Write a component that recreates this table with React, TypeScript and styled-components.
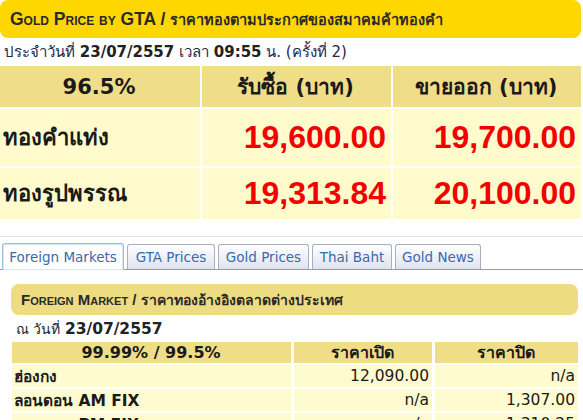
import React from "react";
import styled, { createGlobalStyle } from "styled-components";

const Global = createGlobalStyle`
  html, body { margin: 0; padding: 0; background: #fff; }
  body { font-family: "DejaVu Sans", "Noto Sans", sans-serif; color: #222; }
`;

const Page = styled.div`
  width: 583px;
  height: 420px;
  overflow: hidden;
  display: flex;
  flex-direction: column;
  & > * { flex-shrink: 0; }
`;

const Banner = styled.div`
  height: 38px;
  margin-right: 2px;
  background: #ffd700;
  border-radius: 8px;
  display: flex;
  align-items: center;
  padding-left: 10px;
  font-family: "Liberation Sans", "Noto Sans", sans-serif;
  font-weight: bold;
  font-size: 17.5px;
  font-variant: small-caps;
  color: #2a2a2a;
  white-space: pre;
`;

const ThaiPart = styled.span<{ $size: number }>`
  font-size: ${(p) => p.$size}px;
`;

const DateLine = styled.div`
  height: 28px;
  display: flex;
  align-items: center;
  padding-left: 4px;
  font-size: 15px;
  color: #26264a;
  b { color: #222; }
`;

const PriceGrid = styled.div`
  display: grid;
  grid-template-columns: 200px 189px 1fr;
  grid-template-rows: 41px 57px 51px;
  gap: 2px;
  margin-right: 2px;
`;

const Cell = styled.div<{ $head?: boolean; $align?: string }>`
  background: ${(p) => (p.$head ? "#efdd88" : "#fffbcc")};
  display: flex;
  align-items: center;
  justify-content: ${(p) => p.$align || "center"};
  font-weight: bold;
  font-size: ${(p) => (p.$head ? "21px" : "22px")};
  color: #1a1a1a;
  padding: 0 5px 0 3px;
`;

const Price = styled.span`
  font-family: "Liberation Sans", sans-serif;
  font-size: 32px;
  font-weight: bold;
  color: #f40000;
`;

const TabArea = styled.div`
  margin-top: 17px;
  border-top: 1px solid #e2e2e2;
  padding-top: 5px;
`;

const TabList = styled.div`
  display: flex;
  gap: 3px;
  padding-left: 2px;
  border-bottom: 1px solid #9a9a9a;
  height: 27px;
  align-items: flex-end;
`;

const Tab = styled.div<{ $active?: boolean; $w: number }>`
  width: ${(p) => p.$w}px;
  height: ${(p) => (p.$active ? "27px" : "25px")};
  box-sizing: border-box;
  display: flex;
  align-items: center;
  justify-content: center;
  font-family: "DejaVu Sans", sans-serif;
  font-size: 13.5px;
  color: #3b6aa8;
  border: 1px solid ${(p) => (p.$active ? "#9cbde4" : "#a9aec0")};
  border-bottom: none;
  border-radius: 3px 3px 0 0;
  background: ${(p) =>
    p.$active ? "#ffffff" : "linear-gradient(#ffffff, #dfe3f0)"};
  box-shadow: ${(p) => (p.$active ? "inset 0 0 0 1px #d6e6f8" : "none")};
  margin-bottom: ${(p) => (p.$active ? "-1px" : "0")};
`;

const Content = styled.div`
  padding: 14px 5px 0 11px;
  display: flex;
  flex-direction: column;
  & > * { flex-shrink: 0; }
`;

const SectionBar = styled.div`
  height: 31px;
  background: #eedc82;
  border-radius: 8px;
  display: flex;
  align-items: center;
  padding-left: 10px;
  font-family: "Liberation Sans", "Noto Sans", sans-serif;
  font-weight: bold;
  font-size: 15px;
  font-variant: small-caps;
  color: #2a2a2a;
  white-space: pre;
`;

const SubDate = styled.div`
  height: 27px;
  display: flex;
  align-items: center;
  padding-left: 5px;
  font-size: 14px;
  b { font-size: 15.5px; }
`;

const MarketGrid = styled.div`
  display: grid;
  grid-template-columns: 279px 138px 1fr;
  grid-template-rows: 21px;
  grid-auto-rows: 22px;
  gap: 2px 3px;
  padding-left: 1px;
`;

const MCell = styled.div<{ $head?: boolean; $align?: string; $bold?: boolean }>`
  background: ${(p) => (p.$head ? "#efdd88" : "#fffbd0")};
  display: flex;
  align-items: center;
  justify-content: ${(p) => p.$align || "center"};
  font-size: ${(p) => (p.$head ? "16px" : "15.5px")};
  font-weight: ${(p) => (p.$bold || p.$head ? "bold" : "normal")};
  padding: 0 3px 0 2px;
  color: #1a1a1a;
`;

const tabs: [string, number][] = [
  ["Foreign Markets", 122],
  ["GTA Prices", 88],
  ["Gold Prices", 91],
  ["Thai Baht", 80],
  ["Gold News", 86],
];

const markets = [
  ["ฮ่องกง", "12,090.00", "n/a"],
  ["ลอนดอน AM FIX", "n/a", "1,307.00"],
  ["ลอนดอน PM FIX", "n/a", "1,310.25"],
];

export default function App() {
  return (
    <Page>
      <Global />
      <Banner>
        Gold Price by GTA / <ThaiPart $size={14.5}>ราคาทองตามประกาศของสมาคมค้าทองคำ</ThaiPart>
      </Banner>
      <DateLine>
        ประจำวันที่&nbsp;<b>23/07/2557</b>&nbsp;เวลา&nbsp;<b>09:55</b>&nbsp;น. (ครั้งที่ 2)
      </DateLine>
      <PriceGrid>
        <Cell $head>96.5%</Cell>
        <Cell $head>รับซื้อ (บาท)</Cell>
        <Cell $head>ขายออก (บาท)</Cell>
        <Cell $align="flex-start">ทองคำแท่ง</Cell>
        <Cell $align="flex-end"><Price>19,600.00</Price></Cell>
        <Cell $align="flex-end"><Price>19,700.00</Price></Cell>
        <Cell $align="flex-start">ทองรูปพรรณ</Cell>
        <Cell $align="flex-end"><Price>19,313.84</Price></Cell>
        <Cell $align="flex-end"><Price>20,100.00</Price></Cell>
      </PriceGrid>
      <TabArea>
        <TabList>
          {tabs.map(([t, w], i) => (
            <Tab key={t} $w={w} $active={i === 0}>{t}</Tab>
          ))}
        </TabList>
      </TabArea>
      <Content>
        <SectionBar>
          Foreign Market / <ThaiPart $size={14}>ราคาทองอ้างอิงตลาดต่างประเทศ</ThaiPart>
        </SectionBar>
        <SubDate>ณ วันที่&nbsp;<b>23/07/2557</b></SubDate>
        <MarketGrid>
          <MCell $head>99.99% / 99.5%</MCell>
          <MCell $head>ราคาเปิด</MCell>
          <MCell $head>ราคาปิด</MCell>
          {markets.map((r) => (
            <React.Fragment key={r[0]}>
              <MCell $align="flex-start" $bold>{r[0]}</MCell>
              <MCell $align="flex-end">{r[1]}</MCell>
              <MCell $align="flex-end">{r[2]}</MCell>
            </React.Fragment>
          ))}
        </MarketGrid>
      </Content>
    </Page>
  );
}
